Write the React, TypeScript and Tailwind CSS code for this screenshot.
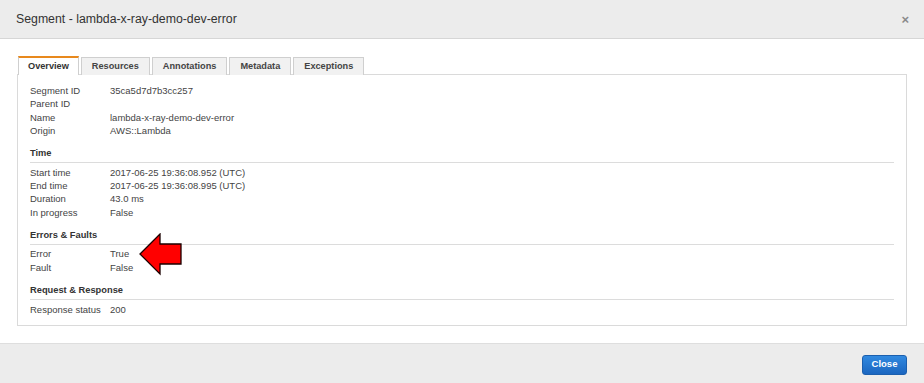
import React from "react"

type Row = [string, string]

const overview: Row[] = [
  ["Segment ID", "35ca5d7d7b3cc257"],
  ["Parent ID", ""],
  ["Name", "lambda-x-ray-demo-dev-error"],
  ["Origin", "AWS::Lambda"],
]

const time: Row[] = [
  ["Start time", "2017-06-25 19:36:08.952 (UTC)"],
  ["End time", "2017-06-25 19:36:08.995 (UTC)"],
  ["Duration", "43.0 ms"],
  ["In progress", "False"],
]

const errors: Row[] = [
  ["Error", "True"],
  ["Fault", "False"],
]

const response: Row[] = [["Response status", "200"]]

const tabs = ["Overview", "Resources", "Annotations", "Metadata", "Exceptions"]

function Arrow() {
  return (
    <svg
      className="absolute left-[109px] top-[-15px]"
      width="44"
      height="43"
      viewBox="0 0 44 43"
    >
      <polygon
        points="1,21 21,1 21,11 42,11 42,31 21,31 21,41"
        fill="#ff0000"
        stroke="#1a0000"
        strokeWidth="1.3"
        strokeLinejoin="miter"
      />
    </svg>
  )
}

function Rows({ rows, arrowOn }: { rows: Row[]; arrowOn?: string }) {
  return (
    <div>
      {rows.map(([label, value]) => (
        <div key={label} className="relative flex h-[13.3px] items-center">
          <span className="w-[80px] shrink-0">{label}</span>
          <span>{value}</span>
          {arrowOn === label && <Arrow />}
        </div>
      ))}
    </div>
  )
}

function Section({ title, rows, arrowOn }: { title: string; rows: Row[]; arrowOn?: string }) {
  return (
    <div className="mt-[8.5px]">
      <div className="flex h-[17px] items-start border-b border-[#dcdcdc] pt-[1px] text-[9.3px] font-bold text-[#333]">
        {title}
      </div>
      <div className="pt-[3px]">
        <Rows rows={rows} arrowOn={arrowOn} />
      </div>
    </div>
  )
}

export default function App() {
  return (
    <div
      className="flex h-[383px] w-[924px] flex-col bg-white text-[#444]"
      style={{ fontFamily: '"Liberation Sans", Arial, sans-serif' }}
    >
      <div className="flex h-[39px] shrink-0 items-center justify-between border-b border-[#d6d6d6] bg-[#ececec] pl-[16px] pr-[15px]">
        <span className="text-[12.3px] text-[#333]">Segment - lambda-x-ray-demo-dev-error</span>
        <span className="text-[13px] font-bold leading-none text-[#8a8a8a]">×</span>
      </div>

      <div className="flex-1 px-[17px] pt-[17px]">
        <div className="flex gap-[2px] pl-[1px]">
          {tabs.map((t, i) => (
            <div
              key={t}
              className={
                i === 0
                  ? "relative z-10 flex h-[19px] items-center border-x border-t-2 border-[#cfcfcf] border-t-[#e8891d] bg-white px-[9px] pt-[1px] text-[9.2px] font-bold text-[#333]"
                  : "mt-[1px] flex h-[18px] items-center border border-b-0 border-[#cfcfcf] bg-[#f1f1f1] px-[10px] pt-[1px] text-[9.2px] font-bold text-[#444]"
              }
            >
              {t}
            </div>
          ))}
        </div>
        <div className="-mt-px h-[252px] border border-[#dadada] pl-[12px] pr-[12px] pt-[9.5px] text-[9.5px]">
          <Rows rows={overview} />
          <Section title="Time" rows={time} />
          <Section title="Errors & Faults" rows={errors} arrowOn="Error" />
          <Section title="Request & Response" rows={response} />
        </div>
      </div>

      <div className="flex h-[40px] shrink-0 items-center justify-end border-t border-[#dedede] bg-[#ececec] pr-[17px]">
        <button className="mt-[2px] flex h-[20px] w-[45px] items-center justify-center rounded-[3px] border border-[#1b5fae] bg-gradient-to-b from-[#3189e0] to-[#1b66c0] text-[9.5px] font-bold text-white">
          Close
        </button>
      </div>
    </div>
  )
}
